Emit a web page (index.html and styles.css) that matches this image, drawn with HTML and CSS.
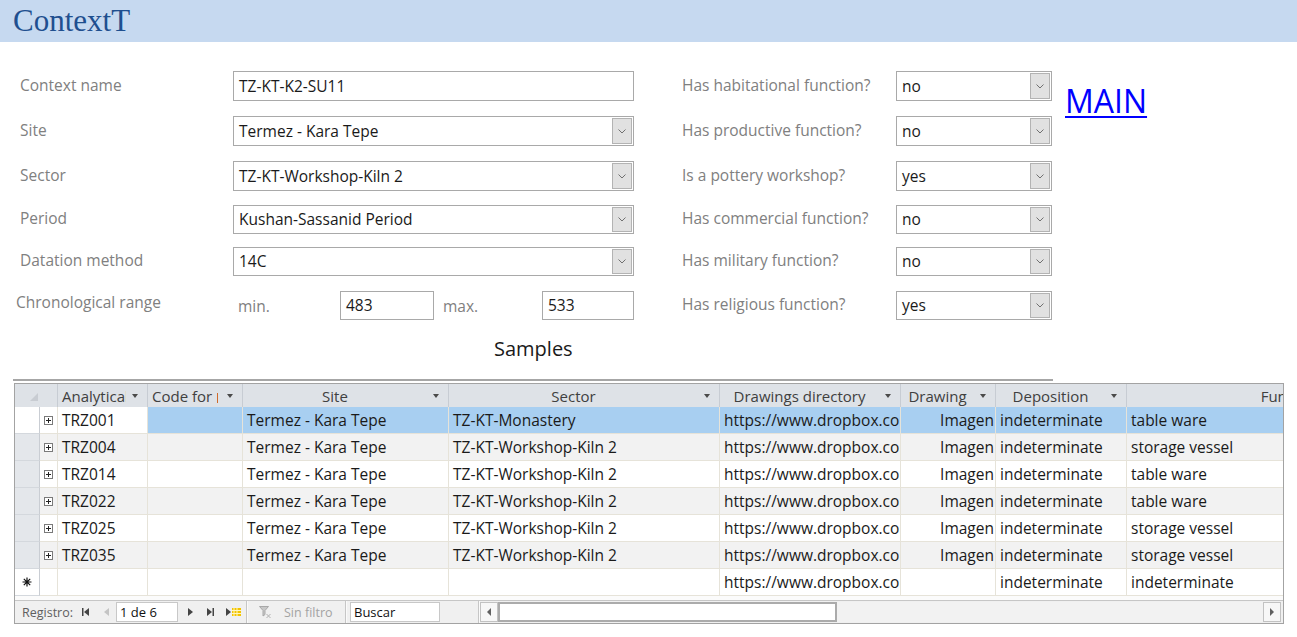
FILE: index.html
```html
<!DOCTYPE html>
<html lang="en">
<head>
<meta charset="utf-8">
<title>ContextT</title>
<link rel="stylesheet" href="styles.css">
</head>
<body>
<header class="titlebar"><h1 class="title">ContextT</h1></header>

<section class="form">
  <div class="lbl cl">Context name</div>
  <div class="field cf"><span class="val">TZ-KT-K2-SU11</span></div>
  <div class="lbl rl">Has habitational function?</div>
  <div class="field rf"><span class="val">no</span><span class="btn"><svg width="8" height="5" viewBox="0 0 8 5"><path d="M0.5 0.5L4 4L7.5 0.5" fill="none" stroke="#707070"/></svg></span></div>
  <a class="main-link" href="#">MAIN</a>

  <div class="lbl cl">Site</div>
  <div class="field cf"><span class="val">Termez - Kara Tepe</span><span class="btn"><svg width="8" height="5" viewBox="0 0 8 5"><path d="M0.5 0.5L4 4L7.5 0.5" fill="none" stroke="#707070"/></svg></span></div>
  <div class="lbl rl">Has productive function?</div>
  <div class="field rf"><span class="val">no</span><span class="btn"><svg width="8" height="5" viewBox="0 0 8 5"><path d="M0.5 0.5L4 4L7.5 0.5" fill="none" stroke="#707070"/></svg></span></div>

  <div class="lbl cl">Sector</div>
  <div class="field cf"><span class="val">TZ-KT-Workshop-Kiln 2</span><span class="btn"><svg width="8" height="5" viewBox="0 0 8 5"><path d="M0.5 0.5L4 4L7.5 0.5" fill="none" stroke="#707070"/></svg></span></div>
  <div class="lbl rl">Is a pottery workshop?</div>
  <div class="field rf"><span class="val">yes</span><span class="btn"><svg width="8" height="5" viewBox="0 0 8 5"><path d="M0.5 0.5L4 4L7.5 0.5" fill="none" stroke="#707070"/></svg></span></div>

  <div class="lbl cl short">Period</div>
  <div class="field cf short"><span class="val">Kushan-Sassanid Period</span><span class="btn"><svg width="8" height="5" viewBox="0 0 8 5"><path d="M0.5 0.5L4 4L7.5 0.5" fill="none" stroke="#707070"/></svg></span></div>
  <div class="lbl rl short">Has commercial function?</div>
  <div class="field rf short"><span class="val">no</span><span class="btn"><svg width="8" height="5" viewBox="0 0 8 5"><path d="M0.5 0.5L4 4L7.5 0.5" fill="none" stroke="#707070"/></svg></span></div>

  <div class="lbl cl short">Datation method</div>
  <div class="field cf short"><span class="val">14C</span><span class="btn"><svg width="8" height="5" viewBox="0 0 8 5"><path d="M0.5 0.5L4 4L7.5 0.5" fill="none" stroke="#707070"/></svg></span></div>
  <div class="lbl rl short">Has military function?</div>
  <div class="field rf short"><span class="val">no</span><span class="btn"><svg width="8" height="5" viewBox="0 0 8 5"><path d="M0.5 0.5L4 4L7.5 0.5" fill="none" stroke="#707070"/></svg></span></div>

  <div class="lbl cl chr">Chronological range</div>
  <div class="range cf">
    <span class="range-lbl">min.</span>
    <div class="field short rbox1"><span class="val">483</span></div>
    <span class="range-lbl max">max.</span>
    <div class="field short rbox2"><span class="val">533</span></div>
  </div>
  <div class="lbl rl short">Has religious function?</div>
  <div class="field rf short"><span class="val">yes</span><span class="btn"><svg width="8" height="5" viewBox="0 0 8 5"><path d="M0.5 0.5L4 4L7.5 0.5" fill="none" stroke="#707070"/></svg></span></div>
</section>

<div class="samples-title">Samples</div>
<div class="rule"></div>

<div class="datagrid">
  <div class="dg-clip">
    <div class="dg-row dg-head">
      <div class="hc corner"><svg width="8" height="8" viewBox="0 0 8 8"><path d="M8 0L8 8L0 8Z" fill="#c8ccd2"/></svg></div>
      <div class="hc w-an left"><span class="ht">Analytical code</span><i class="arr"></i></div>
      <div class="hc w-code left"><span class="ht">Code for<span class="caret"></span></span><i class="arr tight"></i></div>
      <div class="hc w-site"><span class="ht">Site</span><i class="arr"></i></div>
      <div class="hc w-sector"><span class="ht">Sector</span><i class="arr"></i></div>
      <div class="hc w-dd"><span class="ht">Drawings directory</span><i class="arr"></i></div>
      <div class="hc w-dr"><span class="ht">Drawing</span><i class="arr"></i></div>
      <div class="hc w-dep"><span class="ht">Deposition</span><i class="arr"></i></div>
      <div class="hc w-fn"><span class="ht">Function</span><i class="arr"></i></div>
    </div>

    <div class="dg-row r-sel">
      <div class="c sel"></div>
      <div class="c exp"><svg width="9" height="9" viewBox="0 0 9 9"><rect x="0.5" y="0.5" width="8" height="8" fill="#fff" stroke="#7a7a7a"/><path d="M2 4.5h5M4.5 2v5" stroke="#222"/></svg></div>
      <div class="c w-an">TRZ001</div>
      <div class="c w-code"></div>
      <div class="c w-site">Termez - Kara Tepe</div>
      <div class="c w-sector">TZ-KT-Monastery</div>
      <div class="c w-dd">https://www.dropbox.com/sh/</div>
      <div class="c w-dr">Imagen</div>
      <div class="c w-dep">indeterminate</div>
      <div class="c w-fn">table ware</div>
    </div>

    <div class="dg-row r-alt">
      <div class="c sel"></div>
      <div class="c exp"><svg width="9" height="9" viewBox="0 0 9 9"><rect x="0.5" y="0.5" width="8" height="8" fill="#fff" stroke="#7a7a7a"/><path d="M2 4.5h5M4.5 2v5" stroke="#222"/></svg></div>
      <div class="c w-an">TRZ004</div>
      <div class="c w-code"></div>
      <div class="c w-site">Termez - Kara Tepe</div>
      <div class="c w-sector">TZ-KT-Workshop-Kiln 2</div>
      <div class="c w-dd">https://www.dropbox.com/sh/</div>
      <div class="c w-dr">Imagen</div>
      <div class="c w-dep">indeterminate</div>
      <div class="c w-fn">storage vessel</div>
    </div>

    <div class="dg-row">
      <div class="c sel"></div>
      <div class="c exp"><svg width="9" height="9" viewBox="0 0 9 9"><rect x="0.5" y="0.5" width="8" height="8" fill="#fff" stroke="#7a7a7a"/><path d="M2 4.5h5M4.5 2v5" stroke="#222"/></svg></div>
      <div class="c w-an">TRZ014</div>
      <div class="c w-code"></div>
      <div class="c w-site">Termez - Kara Tepe</div>
      <div class="c w-sector">TZ-KT-Workshop-Kiln 2</div>
      <div class="c w-dd">https://www.dropbox.com/sh/</div>
      <div class="c w-dr">Imagen</div>
      <div class="c w-dep">indeterminate</div>
      <div class="c w-fn">table ware</div>
    </div>

    <div class="dg-row r-alt">
      <div class="c sel"></div>
      <div class="c exp"><svg width="9" height="9" viewBox="0 0 9 9"><rect x="0.5" y="0.5" width="8" height="8" fill="#fff" stroke="#7a7a7a"/><path d="M2 4.5h5M4.5 2v5" stroke="#222"/></svg></div>
      <div class="c w-an">TRZ022</div>
      <div class="c w-code"></div>
      <div class="c w-site">Termez - Kara Tepe</div>
      <div class="c w-sector">TZ-KT-Workshop-Kiln 2</div>
      <div class="c w-dd">https://www.dropbox.com/sh/</div>
      <div class="c w-dr">Imagen</div>
      <div class="c w-dep">indeterminate</div>
      <div class="c w-fn">table ware</div>
    </div>

    <div class="dg-row">
      <div class="c sel"></div>
      <div class="c exp"><svg width="9" height="9" viewBox="0 0 9 9"><rect x="0.5" y="0.5" width="8" height="8" fill="#fff" stroke="#7a7a7a"/><path d="M2 4.5h5M4.5 2v5" stroke="#222"/></svg></div>
      <div class="c w-an">TRZ025</div>
      <div class="c w-code"></div>
      <div class="c w-site">Termez - Kara Tepe</div>
      <div class="c w-sector">TZ-KT-Workshop-Kiln 2</div>
      <div class="c w-dd">https://www.dropbox.com/sh/</div>
      <div class="c w-dr">Imagen</div>
      <div class="c w-dep">indeterminate</div>
      <div class="c w-fn">storage vessel</div>
    </div>

    <div class="dg-row r-alt">
      <div class="c sel"></div>
      <div class="c exp"><svg width="9" height="9" viewBox="0 0 9 9"><rect x="0.5" y="0.5" width="8" height="8" fill="#fff" stroke="#7a7a7a"/><path d="M2 4.5h5M4.5 2v5" stroke="#222"/></svg></div>
      <div class="c w-an">TRZ035</div>
      <div class="c w-code"></div>
      <div class="c w-site">Termez - Kara Tepe</div>
      <div class="c w-sector">TZ-KT-Workshop-Kiln 2</div>
      <div class="c w-dd">https://www.dropbox.com/sh/</div>
      <div class="c w-dr">Imagen</div>
      <div class="c w-dep">indeterminate</div>
      <div class="c w-fn">storage vessel</div>
    </div>

    <div class="dg-row r-new">
      <div class="c sel"><svg width="10" height="10" viewBox="0 0 10 10"><path d="M5 0.5v9M0.5 5h9M1.8 1.8l6.4 6.4M8.2 1.8l-6.4 6.4" stroke="#111" stroke-width="1.2"/></svg></div>
      <div class="c exp"></div>
      <div class="c w-an"></div>
      <div class="c w-code"></div>
      <div class="c w-site"></div>
      <div class="c w-sector"></div>
      <div class="c w-dd">https://www.dropbox.com/sh/</div>
      <div class="c w-dr"></div>
      <div class="c w-dep">indeterminate</div>
      <div class="c w-fn">indeterminate</div>
    </div>
  </div>
  <div class="dg-filler"></div>
  <div class="dg-nav">
    <span class="nav-label">Registro:</span>
    <svg class="ni ni-first" width="7" height="8" viewBox="0 0 7 8"><rect x="0" y="0" width="1.5" height="8" fill="#444"/><path d="M7 0L2 4L7 8Z" fill="#444"/></svg>
    <svg class="ni ni-prev" width="5" height="8" viewBox="0 0 5 8"><path d="M5 0L0 4L5 8Z" fill="#c4c4c4"/></svg>
    <span class="nav-input rec">1 de 6</span>
    <svg class="ni ni-next" width="5" height="8" viewBox="0 0 5 8"><path d="M0 0L5 4L0 8Z" fill="#444"/></svg>
    <svg class="ni ni-last" width="7" height="8" viewBox="0 0 7 8"><path d="M0 0L5 4L0 8Z" fill="#444"/><rect x="5.5" y="0" width="1.5" height="8" fill="#444"/></svg>
    <svg class="ni ni-new" width="15" height="8" viewBox="0 0 15 8"><path d="M0 0L5 4L0 8Z" fill="#444"/><rect x="6" y="0" width="9" height="8" fill="#f3c400"/><path d="M8 0v8M11 0v8M6 2.5h9M6 5.5h9" stroke="#fff6c0" stroke-width="1"/></svg>
    <span class="nav-sep s1"></span>
    <svg class="ni ni-filter" width="12" height="12" viewBox="0 0 12 12"><path d="M0.5 0.5h9l-3.5 4v4l-2 1.5v-5.5z" fill="#c8c8c8" stroke="#a8a8a8"/><path d="M7.5 8l4 4M11.5 8l-4 4" stroke="#b0b0b0"/></svg>
    <span class="nav-filter">Sin filtro</span>
    <span class="nav-sep"></span>
    <span class="nav-input search">Buscar</span>
    <span class="nav-sep s3"></span>
    <div class="hscroll">
      <span class="sb-btn"><svg width="4" height="8" viewBox="0 0 4 8"><path d="M4 0L0 4L4 8Z" fill="#606060"/></svg></span>
      <span class="sb-thumb"></span>
      <span class="sb-track"></span>
      <span class="sb-btn"><svg width="4" height="8" viewBox="0 0 4 8"><path d="M0 0L4 4L0 8Z" fill="#606060"/></svg></span>
    </div>
  </div>
</div>
</body>
</html>
```

FILE: styles.css
```css
* { box-sizing: border-box; }

body {
  margin: 0;
  font-family: "Open Sans", "Noto Sans", sans-serif;
  background: #ffffff;
  color: #1a1a1a;
}

/* title band */
.titlebar {
  height: 42px;
  background: #c6d9f0;
  padding-left: 13px;
}
.title {
  margin: 0;
  font: 400 31px/42px "Liberation Serif", serif;
  color: #1f4f8f;
}

/* form */
.form {
  display: grid;
  grid-template-columns: 213px 401px 48px 214px 156px auto;
  grid-template-rows: 45px 45px 44px 42px 44px 29px;
  align-items: start;
  margin: 29px 0 0 20px;
}
.cl { grid-column: 1; }
.cf { grid-column: 2; }
.rl { grid-column: 4; }
.rf { grid-column: 5; }

.lbl {
  font-size: 15.5px;
  color: #808080;
  line-height: 29px;
  white-space: nowrap;
}
.lbl.short { line-height: 27px; }
.lbl.chr { line-height: 23px; margin-left: -4px; }

.field {
  display: flex;
  height: 30px;
  border: 1px solid #a9a9a9;
  background: #ffffff;
}
.field.short { height: 29px; }
.val {
  flex: 1;
  min-width: 0;
  padding-left: 5px;
  font-size: 15.5px;
  line-height: 28px;
  color: #1a1a1a;
  white-space: nowrap;
  overflow: hidden;
}
.field.short .val { line-height: 27px; }
.btn {
  width: 20px;
  flex: none;
  margin: 1px 1px 1px 0;
  background: #e1e1e1;
  border: 1px solid #b3b3b3;
  display: flex;
  align-items: center;
  justify-content: center;
}

.range {
  display: flex;
  align-items: center;
}
.range-lbl {
  width: 107px;
  padding-left: 5px;
  font-size: 15.5px;
  color: #808080;
}
.range-lbl.max { width: 108px; padding-left: 9px; }
.rbox1 { width: 94px; }
.rbox2 { flex: 1; }

.main-link {
  grid-column: 6;
  grid-row: 1 / span 2;
  margin: 14px 0 0 13px;
  font-size: 32px;
  line-height: 32px;
  color: #0000ff;
  text-decoration: underline;
  text-decoration-thickness: 2px;
  text-underline-offset: 3px;
}

.samples-title {
  margin: 17px 0 0 494px;
  font-size: 20px;
  line-height: 24px;
  color: #1a1a1a;
}
.rule {
  margin: 18px 0 0 13px;
  width: 1040px;
  height: 2px;
  background: #a6a6a6;
}

/* datagrid */
.datagrid {
  margin: 2px 0 0 14px;
  width: 1270px;
  border: 1px solid #a3a3a3;
  background: #ffffff;
}
.dg-clip { overflow: hidden; }
.dg-row {
  display: flex;
  width: max-content;
}
.dg-head {
  height: 23px;
  background: #dee2e7;
}
.hc {
  flex: none;
  display: flex;
  align-items: center;
  height: 23px;
  border-right: 1px solid #c7ccd3;
  font-size: 15px;
  color: #404040;
}
.hc.corner {
  width: 43px;
  align-items: flex-end;
  padding: 0 0 6px 15px;
}
.ht {
  flex: 1;
  min-width: 0;
  overflow: hidden;
  white-space: nowrap;
  text-align: center;
}
.hc.left .ht { text-align: left; padding-left: 4px; }
.caret {
  display: inline-block;
  width: 1px;
  height: 10px;
  margin-left: 5px;
  background: #d06a2a;
  vertical-align: -1px;
}
.arr {
  flex: none;
  width: 0;
  height: 0;
  border-left: 3.5px solid transparent;
  border-right: 3.5px solid transparent;
  border-top: 4px solid #4a4a4a;
  margin: 0 9px 0 6px;
}
.arr.tight { margin-left: 2px; }

.w-an { width: 90px; }
.w-code { width: 95px; }
.w-site { width: 206px; }
.w-sector { width: 271px; }
.w-dd { width: 181px; }
.w-dr { width: 95px; }
.w-dep { width: 131px; }
.w-fn { width: 350px; }

.c {
  flex: none;
  height: 27px;
  padding: 0 4px;
  border-right: 1px solid #e6e3d9;
  border-bottom: 1px solid #e6e3d9;
  font-size: 15.5px;
  line-height: 26px;
  color: #1a1a1a;
  white-space: nowrap;
  overflow: hidden;
  background: #ffffff;
}
.c.sel {
  width: 25px;
  padding: 0;
  background: #e4e7eb;
  border-right-color: #c9cdd3;
  border-bottom-color: #d4d8dd;
  display: flex;
  align-items: center;
  justify-content: center;
}
.c.exp {
  width: 18px;
  padding: 0 0 0 4px;
  display: flex;
  align-items: center;
}
.c.w-dd { padding-right: 0; }
.c.w-dr { text-align: right; padding-right: 1px; }

.r-alt .c { background: #f2f2f2; }
.r-alt .c.sel { background: #e4e7eb; }
.r-sel .c { background: #a8cff1; }
.r-sel .c.sel,
.r-sel .c.exp,
.r-sel .c.w-an { background: #ffffff; }
.r-new .c.sel { background: #ffffff; }

.dg-filler {
  height: 4px;
  background: #fbfbfb;
}

.dg-nav {
  height: 23px;
  display: flex;
  align-items: center;
  background: #f0f0f0;
  border-top: 1px solid #c6c6c6;
  font-size: 12.5px;
  color: #5f5f5f;
}
.nav-label { width: 67px; padding-left: 7px; flex: none; }
.ni { flex: none; display: block; }
.ni-prev { margin-left: 15px; }
.nav-input {
  flex: none;
  height: 20px;
  background: #ffffff;
  border: 1px solid #c8c8c8;
  padding-left: 3px;
  font-size: 13px;
  line-height: 18px;
  color: #111111;
}
.nav-input.rec { width: 62px; margin-left: 7px; }
.ni-next { margin-left: 10px; }
.ni-last { margin-left: 14px; }
.ni-new { margin-left: 12px; }
.nav-sep {
  flex: none;
  width: 2px;
  height: 22px;
  border-left: 1px solid #c6c6c6;
  border-right: 1px solid #fafafa;
}
.nav-sep.s1 { margin-left: 5px; }
.ni-filter { margin-left: 11px; }
.nav-filter { width: 74px; padding-left: 13px; color: #a3a3a3; flex: none; }
.nav-input.search { width: 90px; margin-left: 3px; }
.nav-sep.s3 { margin-left: 38px; }
.hscroll {
  flex: 1;
  display: flex;
  height: 20px;
  margin: 0 2px 0 0;
  background: #f2f2f2;
}
.sb-btn {
  flex: none;
  width: 18px;
  border: 1px solid #c2c2c2;
  background: #f7f7f7;
  display: flex;
  align-items: center;
  justify-content: center;
}
.sb-thumb {
  flex: none;
  width: 339px;
  background: #ffffff;
  border: 2px solid #ababab;
}
.sb-track { flex: 1; }
```
